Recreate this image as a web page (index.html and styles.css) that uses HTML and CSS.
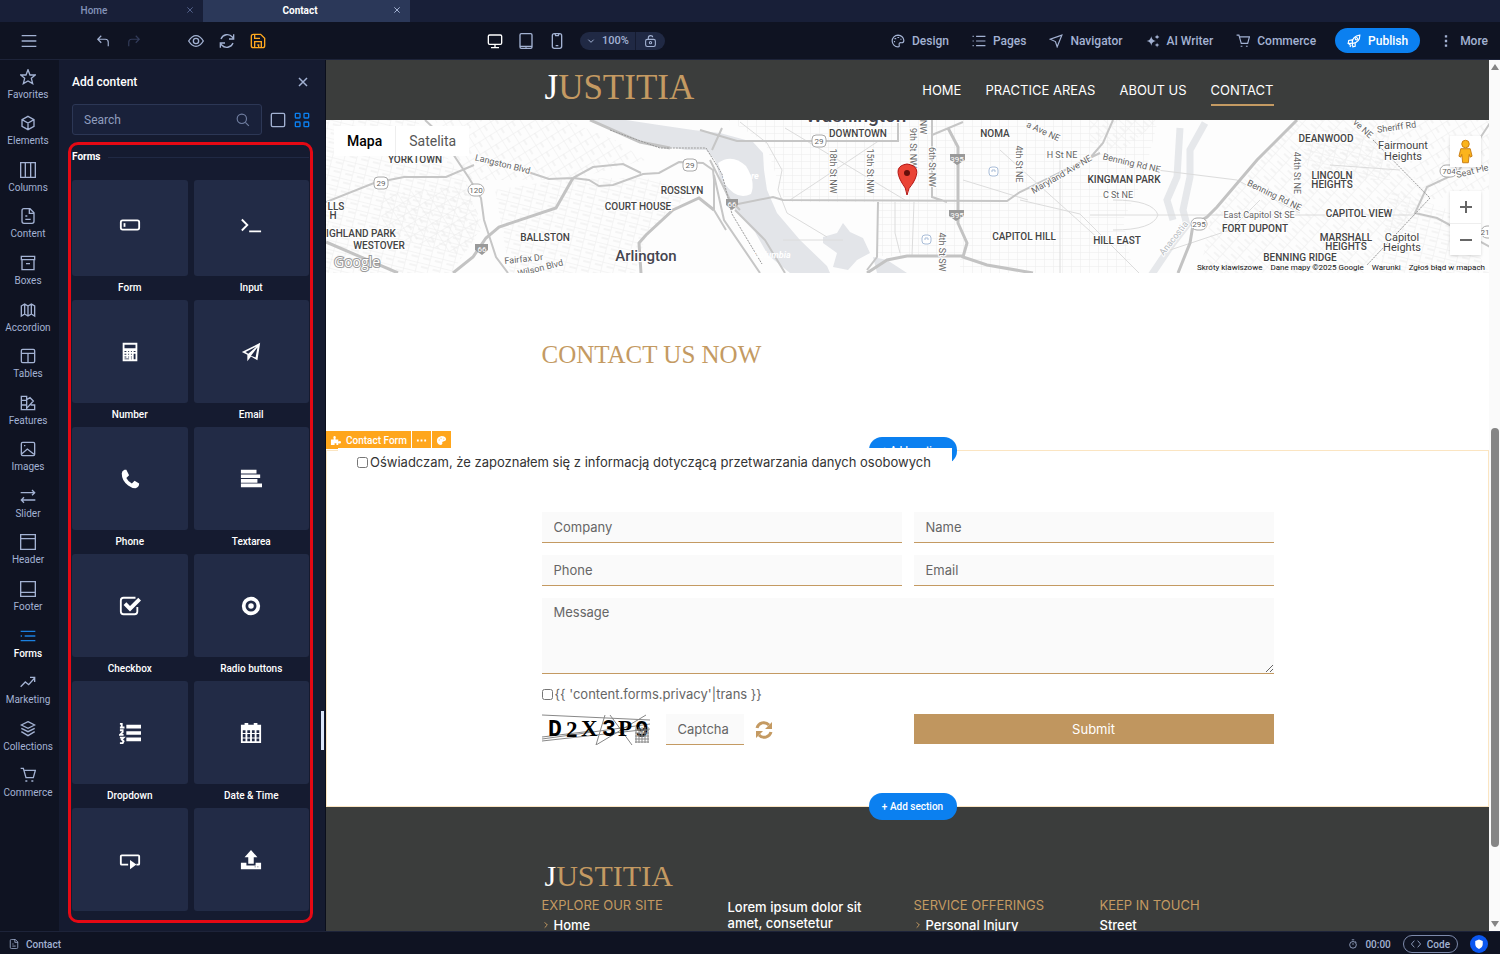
FILE: index.html
```html
<!DOCTYPE html>
<html lang="en">
<head>
	<meta charset="utf-8">
	<meta name="viewport" content="width=device-width, initial-scale=1.0">
	<title>Contact</title>
	<link rel="stylesheet" href="styles.css">
</head>
<body>
	<!-- icon sprite -->
	<svg class="sprite" aria-hidden="true">
		<symbol id="i-menu" viewBox="0 0 24 24"><path d="M1 4h22M1 12h22M1 20h22"/></symbol>
		<symbol id="i-close" viewBox="0 0 24 24"><path d="M4 4l16 16M20 4L4 20"/></symbol>
		<symbol id="i-undo" viewBox="0 0 24 24"><path d="M9 3L3 9l6 6M3 9h13q5 0 5 5v7"/></symbol>
		<symbol id="i-redo" viewBox="0 0 24 24"><path d="M15 3l6 6-6 6M21 9H8q-5 0-5 5v7"/></symbol>
		<symbol id="i-eye" viewBox="0 0 24 24"><path d="M1 12Q6 4 12 4t11 8q-5 8-11 8T1 12z"/><circle cx="12" cy="12" r="4"/></symbol>
		<symbol id="i-sync" viewBox="0 0 24 24"><path d="M3 9a10 10 0 0 1 17-3l2 3M22 2v7h-7M21 15a10 10 0 0 1-17 3l-2-3M2 22v-7h7"/></symbol>
		<symbol id="i-save" viewBox="0 0 24 24"><path d="M5 2h11l6 6v11q0 3-3 3H5q-3 0-3-3V5q0-3 3-3zM7 2v6h8M7 22v-9h10v9M11 18h2v4"/></symbol>
		<symbol id="i-desktop" viewBox="0 0 24 24"><rect x="2" y="3" width="20" height="14" rx="2"/><path d="M12 17v4M6 22h12"/></symbol>
		<symbol id="i-tablet" viewBox="0 0 24 24"><rect x="3" y="1" width="18" height="22" rx="2"/><path d="M3 20h18M11 21h2"/></symbol>
		<symbol id="i-phone" viewBox="0 0 24 24"><rect x="5" y="1" width="14" height="22" rx="3"/><path d="M9 1l1 3h4l1-3M10 19h4"/></symbol>
		<symbol id="i-chevron" viewBox="0 0 24 24"><path d="M4 8l8 8 8-8"/></symbol>
		<symbol id="i-lock" viewBox="0 0 24 24"><rect x="3" y="9" width="18" height="13" rx="3"/><path d="M8 9V6q0-4 4-4t4 3"/><circle cx="12" cy="15" r="2"/></symbol>
		<symbol id="i-palette" viewBox="0 0 24 24"><path d="M12 2a10 10 0 1 0 0 20q3 0 2-3-1-5 4-4 4 0 4-4Q21 3 12 2z"/><path d="M6 8h3M11 6h3M16 9h2M5 13h2"/></symbol>
		<symbol id="i-list" viewBox="0 0 24 24"><path d="M7 4h16M7 12h16M7 20h16M1 4h2M1 12h2M1 20h2"/></symbol>
		<symbol id="i-nav" viewBox="0 0 24 24"><path d="M22 2L2 9l9 4 3 9z"/></symbol>
		<symbol id="i-sparkle" viewBox="0 0 24 24"><path class="fill" d="M9 4q1 7 8 8-7 1-8 8-1-7-8-8 7-1 8-8zM19 1q0 3 4 4-4 1-4 4 0-3-4-4 4-1 4-4zM19 15q0 3 4 4-4 1-4 4 0-3-4-4 4-1 4-4z"/></symbol>
		<symbol id="i-cart" viewBox="0 0 24 24"><path d="M1 2h4l4 14h11l3-11H6"/><path d="M8 21h3M17 21h3"/></symbol>
		<symbol id="i-rocket" viewBox="0 0 24 24"><path d="M9 15q0-11 13-13 0 12-12 14zM9 10L3 11l-1 5 6 0M14 16v5l-4 1-1-6M3 19l3-2M5 22l2-3"/><circle cx="16" cy="8" r="2"/></symbol>
		<symbol id="i-dots" viewBox="0 0 24 24"><path class="fill" d="M10 2h4v4h-4zM10 10h4v4h-4zM10 18h4v4h-4z"/></symbol>
		<symbol id="i-search" viewBox="0 0 24 24"><circle cx="10" cy="10" r="8"/><path d="M16 16l6 6"/></symbol>
		<symbol id="i-square" viewBox="0 0 24 24"><rect x="2" y="2" width="20" height="20" rx="2"/></symbol>
		<symbol id="i-grid" viewBox="0 0 24 24"><rect x="2" y="2" width="7" height="7" rx="1"/><rect x="15" y="2" width="7" height="7" rx="1"/><rect x="2" y="15" width="7" height="7" rx="1"/><rect x="15" y="15" width="7" height="7" rx="1"/></symbol>
		<symbol id="i-star" viewBox="0 0 24 24"><path d="M12 1l3 8h8l-6 5 2 8-7-4-7 4 2-8-6-5h8z"/></symbol>
		<symbol id="i-cube" viewBox="0 0 24 24"><path d="M12 2l9 5v10l-9 5-9-5V7zM3 7l9 5 9-5M12 12v10"/></symbol>
		<symbol id="i-columns" viewBox="0 0 24 24"><path d="M1 1h22v22H1zM8 1v22M16 1v22"/></symbol>
		<symbol id="i-file" viewBox="0 0 24 24"><path d="M6 1h9l6 6v13q0 3-3 3H6q-3 0-3-3V4q0-3 3-3zM14 1v7h7M8 12h3M8 17h8"/></symbol>
		<symbol id="i-box" viewBox="0 0 24 24"><path d="M2 2h20v5H2zM3 7v15h18V7M9 13h6"/></symbol>
		<symbol id="i-accordion" viewBox="0 0 24 24"><path d="M2 6l5-3 5 3 5-3 5 3v15l-5-3-5 3-5-3-5 3zM7 3v15M12 6v15M17 3v15"/></symbol>
		<symbol id="i-table" viewBox="0 0 24 24"><rect x="2" y="2" width="20" height="20" rx="2"/><path d="M2 8h20M12 8v14"/></symbol>
		<symbol id="i-features" viewBox="0 0 24 24"><path d="M2 2h8v20H2zM2 8h8M2 15h8M10 7l5-3 5 5-10 11M10 22h12v-7h-6"/></symbol>
		<symbol id="i-image" viewBox="0 0 24 24"><rect x="2" y="2" width="20" height="20" rx="2"/><path d="M2 20l9-8 10 8M6 7h2"/></symbol>
		<symbol id="i-slider" viewBox="0 0 24 24"><path d="M1 7h21M18 3l4 4-4 4M23 18H2M6 14l-4 4 4 4"/></symbol>
		<symbol id="i-header" viewBox="0 0 24 24"><path d="M1 1h22v22H1zM1 7h22"/></symbol>
		<symbol id="i-footer" viewBox="0 0 24 24"><path d="M1 1h22v22H1zM1 17h22"/></symbol>
		<symbol id="i-forms" viewBox="0 0 24 24"><path d="M1 5h22M7 12h16M1 12h2M1 19h22"/></symbol>
		<symbol id="i-trend" viewBox="0 0 24 24"><path d="M1 19l7-7 5 4 9-10M15 5h7v7"/></symbol>
		<symbol id="i-layers" viewBox="0 0 24 24"><path d="M12 1l10 5-10 5L2 6zM2 11l10 5 10-5M2 16l10 6 10-6"/></symbol>
		<symbol id="i-clock" viewBox="0 0 24 24"><circle cx="12" cy="14" r="8"/><path d="M9 2h6M12 10v4M18 6l2 2"/></symbol>
		<symbol id="i-code" viewBox="0 0 24 24"><path d="M8 4l-7 8 7 8M16 4l7 8-7 8"/></symbol>
		<symbol id="i-shield" viewBox="0 0 24 24"><path class="fill" d="M12 1l9 4v7q0 8-9 12-9-4-9-12V5z"/></symbol>

		<symbol id="t-form" viewBox="0 0 24 24"><rect x="2" y="7" width="20" height="10" rx="2"/><path d="M6 10v4"/></symbol>
		<symbol id="t-input" viewBox="0 0 24 24"><path d="M2 6l6 6-6 6M10 19h13"/></symbol>
		<symbol id="t-number" viewBox="0 0 24 24"><path class="fill" fill-rule="evenodd" d="M4 2h16v20H4zM6 4v4h12V4zM6 11v1h2v-1zM10 11v1h1v-1zM13 11v1h1v-1zM16 11v1h2v-1zM6 14v1h2v-1zM10 14v1h1v-1zM13 14v1h1v-1zM16 14v6h2v-6zM6 17v1h2v-1zM10 17v1h1v-1zM13 17v1h1v-1zM6 19v1h5v-1zM13 19v1h1v-1z"/></symbol>
		<symbol id="t-email" viewBox="0 0 24 24"><path class="fill" fill-rule="evenodd" d="M22 2l-3 19-7-4-4 5v-7l-6-3zM18 6L6 12l3 2zM19 7l-7 9 5 2z"/></symbol>
		<symbol id="t-phone" viewBox="0 0 24 24"><path class="fill" d="M3 6q0-3 3-4h2l3 6-3 3q2 4 6 6l3-3 5 3q0 4-4 5-4 0-8-3-7-5-7-13z"/></symbol>
		<symbol id="t-text" viewBox="0 0 24 24"><path class="fill" d="M1 2h17v4H1zM1 7h21v4H1zM1 12h18v4H1zM1 17h23v4H1z"/></symbol>
		<symbol id="t-check" viewBox="0 0 24 24"><path d="M20 13v5q0 3-3 3H5q-3 0-3-3V6q0-3 3-3h13"/><path class="fill" d="M5 11l3-3 4 4 9-9 3 3-12 12z"/></symbol>
		<symbol id="t-radio" viewBox="0 0 24 24"><circle class="thick" cx="12" cy="12" r="8"/><circle class="fill" cx="12" cy="12" r="3"/></symbol>
		<symbol id="t-drop" viewBox="0 0 24 24"><path class="fill" d="M8 3h16v4H8zM8 10h16v4H8zM8 17h16v4H8z"/><path d="M1 2h2v5M1 6h5M1 9h3v2l-3 3h4M1 17h4l-2 2 2 2-1 2H1"/></symbol>
		<symbol id="t-date" viewBox="0 0 24 24"><path class="fill" fill-rule="evenodd" d="M1 3h4V1h4v2h6V1h4v2h4v20H1zM3 9v3h3V9zM8 9v3h3V9zM13 9v3h3V9zM18 9v3h3V9zM3 13v4h3v-4zM8 13v4h3v-4zM13 13v4h3v-4zM18 13v4h3v-4zM3 18v3h3v-3zM8 18v3h3v-3zM13 18v3h3v-3zM18 18v3h3v-3z"/></symbol>
		<symbol id="t-button" viewBox="0 0 24 24"><path d="M10 17H3q-1 0-1-1V8q0-1 1-1h18q1 0 1 1v8q0 1-1 1h-2"/><path class="fill" d="M12 12l7 5-7 5z"/></symbol>
		<symbol id="t-upload" viewBox="0 0 24 24"><path class="fill" fill-rule="evenodd" d="M12 1l7 8h-4v7H9V9H5zM1 15h6v3h10v-3h6v7H1zM16 19v1h1v-1zM19 19v1h1v-1z"/></symbol>
	</svg>

	<div class="app">
		<div class="tabs">
			<div class="tab"><span>Home</span><button class="tab-close" aria-label="Close Home"><svg class="icon xs"><use href="#i-close"/></svg></button></div>
			<div class="tab active"><span>Contact</span><button class="tab-close" aria-label="Close Contact"><svg class="icon xs"><use href="#i-close"/></svg></button></div>
		</div>

		<div class="toolbar">
			<div class="tools-left">
				<button class="menu" aria-label="Menu"><svg class="icon"><use href="#i-menu"/></svg></button>
				<div class="history">
					<button aria-label="Undo"><svg class="icon sm"><use href="#i-undo"/></svg></button>
					<button class="off" aria-label="Redo"><svg class="icon sm"><use href="#i-redo"/></svg></button>
				</div>
				<div class="actions">
					<button aria-label="Preview"><svg class="icon"><use href="#i-eye"/></svg></button>
					<button aria-label="Refresh"><svg class="icon"><use href="#i-sync"/></svg></button>
					<button class="save" aria-label="Save"><svg class="icon"><use href="#i-save"/></svg></button>
				</div>
			</div>
			<div class="devices">
				<button class="on" aria-label="Desktop"><svg class="icon"><use href="#i-desktop"/></svg></button>
				<button aria-label="Tablet"><svg class="icon"><use href="#i-tablet"/></svg></button>
				<button aria-label="Phone"><svg class="icon"><use href="#i-phone"/></svg></button>
				<div class="zoom">
					<button class="zoom-level"><svg class="icon xs"><use href="#i-chevron"/></svg>100%</button>
					<button class="zoom-lock" aria-label="Lock zoom"><svg class="icon sm"><use href="#i-lock"/></svg></button>
				</div>
			</div>
			<div class="tools-right">
				<button><svg class="icon sm"><use href="#i-palette"/></svg>Design</button>
				<button><svg class="icon sm"><use href="#i-list"/></svg>Pages</button>
				<button><svg class="icon sm"><use href="#i-nav"/></svg>Navigator</button>
				<button><svg class="icon sm"><use href="#i-sparkle"/></svg>AI Writer</button>
				<button><svg class="icon sm"><use href="#i-cart"/></svg>Commerce</button>
				<button class="publish"><svg class="icon sm"><use href="#i-rocket"/></svg>Publish</button>
				<button><svg class="icon sm"><use href="#i-dots"/></svg>More</button>
			</div>
		</div>

		<div class="main">
			<nav class="sidebar">
				<a href="#"><svg class="icon"><use href="#i-star"/></svg>Favorites</a>
				<a href="#"><svg class="icon"><use href="#i-cube"/></svg>Elements</a>
				<a href="#"><svg class="icon"><use href="#i-columns"/></svg>Columns</a>
				<a href="#"><svg class="icon"><use href="#i-file"/></svg>Content</a>
				<a href="#"><svg class="icon"><use href="#i-box"/></svg>Boxes</a>
				<a href="#"><svg class="icon"><use href="#i-accordion"/></svg>Accordion</a>
				<a href="#"><svg class="icon"><use href="#i-table"/></svg>Tables</a>
				<a href="#"><svg class="icon"><use href="#i-features"/></svg>Features</a>
				<a href="#"><svg class="icon"><use href="#i-image"/></svg>Images</a>
				<a href="#"><svg class="icon"><use href="#i-slider"/></svg>Slider</a>
				<a href="#"><svg class="icon"><use href="#i-header"/></svg>Header</a>
				<a href="#"><svg class="icon"><use href="#i-footer"/></svg>Footer</a>
				<a href="#" class="current"><svg class="icon"><use href="#i-forms"/></svg>Forms</a>
				<a href="#"><svg class="icon"><use href="#i-trend"/></svg>Marketing</a>
				<a href="#"><svg class="icon"><use href="#i-layers"/></svg>Collections</a>
				<a href="#"><svg class="icon"><use href="#i-cart"/></svg>Commerce</a>
			</nav>

			<aside class="panel">
				<div class="panel-head">
					<h2>Add content</h2>
					<button aria-label="Close panel"><svg class="icon xm"><use href="#i-close"/></svg></button>
				</div>
				<div class="panel-search">
					<div class="search-box">
						<input type="text" placeholder="Search" aria-label="Search">
						<svg class="icon sm"><use href="#i-search"/></svg>
					</div>
					<button aria-label="Large tiles"><svg class="icon"><use href="#i-square"/></svg></button>
					<button class="on" aria-label="Small tiles"><svg class="icon"><use href="#i-grid"/></svg></button>
				</div>
				<div class="group">
					<h3>Forms</h3>
					<div class="tiles">
						<button class="tile first"><span><svg class="icon lg"><use href="#t-form"/></svg></span>Form</button>
						<button class="tile first"><span><svg class="icon lg"><use href="#t-input"/></svg></span>Input</button>
						<button class="tile"><span><svg class="icon lg"><use href="#t-number"/></svg></span>Number</button>
						<button class="tile"><span><svg class="icon lg"><use href="#t-email"/></svg></span>Email</button>
						<button class="tile"><span><svg class="icon lg"><use href="#t-phone"/></svg></span>Phone</button>
						<button class="tile"><span><svg class="icon lg"><use href="#t-text"/></svg></span>Textarea</button>
						<button class="tile"><span><svg class="icon lg"><use href="#t-check"/></svg></span>Checkbox</button>
						<button class="tile"><span><svg class="icon lg"><use href="#t-radio"/></svg></span>Radio buttons</button>
						<button class="tile"><span><svg class="icon lg"><use href="#t-drop"/></svg></span>Dropdown</button>
						<button class="tile"><span><svg class="icon lg"><use href="#t-date"/></svg></span>Date &amp; Time</button>
						<button class="tile" aria-label="Button"><span><svg class="icon lg"><use href="#t-button"/></svg></span></button>
						<button class="tile" aria-label="File upload"><span><svg class="icon lg"><use href="#t-upload"/></svg></span></button>
					</div>
				</div>
				<div class="panel-thumb"></div>
			</aside>

			<div class="canvas">
				<div class="site">
					<header class="site-head">
						<div class="wrap">
							<div class="logo"><b>J</b>USTITIA</div>
							<nav>
								<a href="#">HOME</a>
								<a href="#">PRACTICE AREAS</a>
								<a href="#">ABOUT US</a>
								<a href="#" class="current">CONTACT</a>
							</nav>
						</div>
					</header>

					<div class="map">
						<svg class="map-view" viewBox="326 120 1163 153" preserveAspectRatio="xMidYMid slice" role="img" aria-label="Washington">
							<defs>
								<pattern id="grid" width="9" height="7" patternUnits="userSpaceOnUse"><path class="street" d="M0 0h9M0 0v7"/></pattern>
								<pattern id="grid-l" width="13" height="11" patternUnits="userSpaceOnUse" patternTransform="rotate(-32)"><path class="street" d="M0 0h13M0 0v11M6 0v6"/></pattern>
								<pattern id="grid-m" width="12" height="9" patternUnits="userSpaceOnUse" patternTransform="rotate(14)"><path class="street" d="M0 0h12M0 0v9M5 4h7"/></pattern>
								<pattern id="grid-r" width="14" height="10" patternUnits="userSpaceOnUse" patternTransform="rotate(42)"><path class="street" d="M0 0h14M0 0v10M7 5h7"/></pattern>
							</defs>
							<!-- small streets -->
							<path fill="url(#grid-m)" d="M326 120h90l50 60 15 50-30 43H326z"/>
							<path fill="url(#grid-l)" d="M380 195l85-10 18 40-20 30-80-20z"/>
							<path fill="url(#grid-l)" d="M435 120h130l50 20 30 20-75 20-100 0z"/>
							<path fill="url(#grid-m)" d="M495 190l75-12 75 0 50 10-50 50-10 35H510z"/>
							<path fill="url(#grid)" d="M728 120h430l-15 60-20 40 10 53H960v-71H785l-20-60z"/>
							<path fill="url(#grid)" d="M878 202h82v54h-82z"/>
							<path fill="url(#grid-r)" d="M1090 120h70l-40 32-30-10z"/>
							<path fill="url(#grid-r)" d="M1210 220l85-100h80l55 80-65 73H1200z"/>
							<path fill="url(#grid-m)" d="M1300 130h90v50h-80zM1390 190l60 20 40 63h-110z"/>
							<path fill="url(#grid-l)" d="M1380 120h109v70l-60 10z"/>
							<!-- water -->
							<path class="water" d="M593 120l19 10 34 13 40 7h20l9 10 7 25 6 15 12 16 15 16 13 23 22 18h40l-3-7-27-26-23-27-10-23-3-20-1-17-10-11-33-9-27-3-34-5-33-5z"/>
							<path class="land" d="M718 163q14-10 28 3 10 16 5 28-14 7-26-10z"/>
							<path class="water" d="M823 237l14-4 6-10 7 9 13 6 7 15-13 7-9 10-15-3 4-14-14-10zM873 257l14 3 20 13h-30z"/>
							<path class="river" d="M1205 123l-15 27v27l-7 33 4 15-14 18-23 34M1180 128l-3 49-10 23 6 20"/>
							<!-- roads -->
							<path class="road-s" d="M740 122l27 21 15 27-4 20 9 23 40 24M783 240h60M895 202v31l5 20M914 202l-2 54M1090 215h325M1157 170l80 10 63 33M785 128l120 72M790 200l90-60M1020 200l60 14 60 60M1060 160v113M963 180l65 20M1000 150l100 90M1113 200q40 0 45 15-5 15-45 15M1330 165l70 5M1170 250l60-20 30-30"/>
							<path class="road" d="M326 202l48-19 30-6h42l28-12M528 172l21 7 24-1 16 2 10 6 14-1 30-11 16-1 20-11 24 1 10 7 1 10v30l12 20M573 178l20-11 30-3 18 9M425 120l14 13 30 45 12 20 3 22 12 37 12 16M700 130l37 11h161v-21M733 205l40-8 10 3 224 1 13-9 80-39M932 120v77l15 5M878 202l-1 55-10 13M932 135l31-13M714 175l10 45 36 53M735 210l30 30 20 33M710 160l20 40 10 10M1113 120l-10 23-13 15M1490 123l-33 50-30 14-12 26 22 5 53 29M722 128l-10 22"/>
							<path class="road-l" d="M453 273l20-16 13-19 13-11 57-19 17-30M326 242l72 31M641 273l-2-30 7-8 27-25 26-12 15 12M590 120l50 22 30 6M948 128l10 19v76l9 20-4 14 24 8 46 8M867 273l20-13 20-4h56M1297 120l-40 40-40 47-10 10-14 8-3 18-12 30"/>
							<path class="border" d="M1373 140l57 58-63 67M610 130l50 18h46l16 26 10 40 30 50"/>
							<!-- road shields -->
							<g class="shield">
								<rect x="374" y="177" width="14" height="12" rx="4"/><text x="381" y="186">29</text>
								<rect x="468" y="184" width="16" height="12" rx="6"/><text x="476" y="193">120</text>
								<rect x="683" y="159" width="14" height="12" rx="4"/><text x="690" y="168">29</text>
								<rect x="812" y="135" width="14" height="12" rx="4"/><text x="819" y="144">29</text>
								<rect x="1191" y="218" width="16" height="12" rx="6"/><text x="1199" y="227">295</text>
								<rect x="1440" y="165" width="17" height="12" rx="6"/><text x="1449" y="174">704</text>
								<rect x="1481" y="226" width="17" height="12" rx="6"/><text x="1485" y="235">21</text>
							</g>
							<g class="shield dark">
								<path d="M475 244h13v6l-6 5-7-5zM726 199h12v6l-6 5-6-5zM950 154h15v6l-8 5-7-5zM949 210h15v6l-8 5-7-5z"/>
								<text x="482" y="252">66</text><text x="732" y="207">66</text><text x="957" y="162">395</text><text x="957" y="218">395</text>
							</g>
							<g class="metro"><rect x="989" y="167" width="9" height="9" rx="3"/><path d="M992 172v-2h3v2"/><rect x="922" y="235" width="9" height="9" rx="3"/><path d="M925 240v-2h3v2"/></g>
							<!-- labels -->
							<g class="area">
								<text x="415" y="163">YORKTOWN</text><text x="336" y="210">LLS</text><text x="333" y="219">H</text>
								<text x="361" y="237">IGHLAND PARK</text><text x="379" y="249">WESTOVER</text>
								<text x="545" y="241">BALLSTON</text><text x="682" y="194">ROSSLYN</text><text x="638" y="210">COURT HOUSE</text>
								<text x="858" y="137">DOWNTOWN</text><text x="995" y="137">NOMA</text><text x="1024" y="240">CAPITOL HILL</text>
								<text x="1124" y="183">KINGMAN PARK</text><text x="1117" y="244">HILL EAST</text><text x="1326" y="142">DEANWOOD</text>
								<text x="1332" y="179">LINCOLN</text><text x="1332" y="188">HEIGHTS</text><text x="1359" y="217">CAPITOL VIEW</text>
								<text x="1255" y="232">FORT DUPONT</text><text x="1346" y="241">MARSHALL</text><text x="1346" y="250">HEIGHTS</text>
								<text x="1300" y="261">BENNING RIDGE</text>
							</g>
							<g class="town">
								<text x="1403" y="149">Fairmount</text><text x="1403" y="160">Heights</text>
								<text x="1402" y="241">Capitol</text><text x="1402" y="251">Heights</text>
							</g>
							<text class="city" x="646" y="261">Arlington</text>
							<text class="capital" x="856" y="122">Washington</text>
							<g class="way">
								<text transform="translate(502 167) rotate(14)">Langston Blvd</text>
								<text transform="translate(524 262) rotate(-6)">Fairfax Dr</text>
								<text transform="translate(541 271) rotate(-14)">Wilson Blvd</text>
								<text transform="translate(830 171) rotate(90)">18th St NW</text>
								<text transform="translate(867 171) rotate(90)">15th St NW</text>
								<text transform="translate(910 148) rotate(90)">9th St NW</text>
								<text transform="translate(929 167) rotate(90)">6th St NW</text>
								<text transform="translate(920 127) rotate(90)">NW</text>
								<text transform="translate(939 252) rotate(90)">4th St SW</text>
								<text transform="translate(1016 164) rotate(90)">4th St NE</text>
								<text x="1062" y="158">H St NE</text>
								<text transform="translate(1063 177) rotate(-30)">Maryland Ave NE</text>
								<text transform="translate(1042 134) rotate(25)">a Ave NE</text>
								<text transform="translate(1131 166) rotate(13)">Benning Rd NE</text>
								<text transform="translate(1273 198) rotate(26)">Benning Rd NE</text>
								<text x="1118" y="198">C St NE</text>
								<text x="1259" y="218">East Capitol St SE</text>
								<text transform="translate(1294 173) rotate(90)">44th St NE</text>
								<text transform="translate(1397 130) rotate(-8)">Sheriff Rd</text>
								<text transform="translate(1361 131) rotate(42)">ve NE</text>
								<text transform="translate(1473 174) rotate(-14)">Seat Ple</text>
								<text transform="translate(1176 240) rotate(-52)" class="faint">Anacostia</text>
								<text x="772" y="258" class="pale">Columbia</text>
								<text x="740" y="179" class="pale">Theodore</text>
							</g>
							<!-- marker -->
							<path class="pin" d="M907 195q-1-8-5-12-10-17 5-19 16 2 6 19-5 5-6 12z"/><circle class="pin-dot" cx="907" cy="173" r="3"/>
							<text class="google" x="334" y="267">Google</text>
						</svg>
						<div class="map-type"><button class="on">Mapa</button><button>Satelita</button></div>
						<button class="pegman" aria-label="Street view">
							<svg viewBox="0 0 16 26"><circle cx="8" cy="5" r="4"/><path d="M3 10h10l2 8-2 1-1-3-1 9H5l-1-9-1 3-2-1z"/></svg>
						</button>
						<div class="map-zoom">
							<button aria-label="Zoom in"><svg class="icon sm"><path d="M7 1v12M1 7h12"/></svg></button>
							<button aria-label="Zoom out"><svg class="icon sm"><path d="M1 7h12"/></svg></button>
						</div>
						<div class="map-legal"><span>Skróty klawiszowe</span><span>Dane mapy ©2025 Google</span><a href="#">Warunki</a><a href="#">Zgłoś błąd w mapach</a></div>
					</div>

					<section class="intro">
						<div class="wrap"><h1>CONTACT US NOW</h1></div>
					</section>

					<section class="contact">
						<div class="section-tag">
							<button><svg viewBox="0 0 12 12"><path d="M1 5h3V4q-1-3 1-3t1 3v1h3v2q3-1 3 1t-3 1v2H7V9H5v2H1z"/></svg>Contact Form</button>
							<button aria-label="More"><svg viewBox="0 0 12 12"><path d="M1 5h2v2H1zM5 5h2v2H5zM9 5h2v2H9z"/></svg></button>
							<button aria-label="Colors"><svg viewBox="0 0 12 12"><path fill-rule="evenodd" d="M6 1q5 0 5 4 0 2-3 2-2 0-1 2 0 2-2 2-4-1-4-5t5-5zM3 5v1h1V5zM5 3v1h1V3zM8 4v1h1V4z"/></svg></button>
						</div>
						<button class="add-section top">+ Add section</button>
						<label class="consent"><input type="checkbox"> Oświadczam, że zapoznałem się z informacją dotyczącą przetwarzania danych osobowych</label>
						<form class="wrap contact-form">
							<input type="text" placeholder="Company" aria-label="Company">
							<input type="text" placeholder="Name" aria-label="Name">
							<input type="tel" placeholder="Phone" aria-label="Phone">
							<input type="email" placeholder="Email" aria-label="Email">
							<textarea placeholder="Message" aria-label="Message"></textarea>
							<label class="privacy"><input type="checkbox">{{ 'content.forms.privacy'|trans }}</label>
							<div class="captcha">
								<svg class="captcha-image" viewBox="0 0 108 31" role="img" aria-label="Captcha code">
									<path d="M0 1l108 5M0 25l108-15M0 27l108-12M54 31l9-30M54 31l50-30M68 1l22 30M0 23l50-6"/>
									<text x="6" y="22" class="mono">D</text><text x="24" y="23">2</text><text x="39" y="22">X</text><text x="60" y="22" class="mono">3</text><text x="76" y="22">P</text><text x="93" y="23" class="mono">9</text>
									<path d="M94 13v16M97 13v16M100 13v16M103 13v16M106 13v16M93 16h14M93 19h14M93 22h14M93 25h14M93 28h14"/>
								</svg>
								<input type="text" placeholder="Captcha" aria-label="Captcha">
								<button type="button" class="reload" aria-label="New code"><svg viewBox="0 0 18 18"><path d="M2 7a7 7 0 0 1 12-3M16 11a7 7 0 0 1-12 3"/><path class="solid" d="M17 1v7h-7zM1 17v-7h7z"/></svg></button>
							</div>
							<button type="submit" class="submit">Submit</button>
						</form>
						<button class="add-section bottom">+ Add section</button>
					</section>

					<footer class="site-foot">
						<div class="wrap">
							<div class="logo small"><b>J</b>USTITIA</div>
							<div class="foot-cols">
								<div><h4>EXPLORE OUR SITE</h4><a href="#"><svg class="icon xs"><use href="#i-chevron"/></svg>Home</a></div>
								<div><p>Lorem ipsum dolor sit amet, consetetur</p></div>
								<div><h4>SERVICE OFFERINGS</h4><a href="#"><svg class="icon xs"><use href="#i-chevron"/></svg>Personal Injury</a></div>
								<div><h4>KEEP IN TOUCH</h4><address>Street</address></div>
							</div>
						</div>
					</footer>
				</div>
				<div class="scrollbar"><i class="up"></i><div class="track"><div class="thumb"></div></div><i class="down"></i></div>
			</div>
		</div>

		<div class="status">
			<span><svg class="icon xxs"><use href="#i-file"/></svg>Contact</span>
			<div class="status-right">
				<span><svg class="icon xxs"><use href="#i-clock"/></svg>00:00</span>
				<button class="code"><svg class="icon xxs"><use href="#i-code"/></svg>Code</button>
				<button class="guard" aria-label="Security"><svg class="icon xxs"><use href="#i-shield"/></svg></button>
			</div>
		</div>
	</div>
</body>
</html>
```
FILE: styles.css
```css
*{
	margin: 0;
	padding: 0;
	box-sizing: border-box;
}
body{
	font-family: Roboto, "Liberation Sans", sans-serif;
	font-size: 12px;
	color: #a3b2d3;
	background-color: #0f1322;
}
button, input, textarea{
	font: inherit;
	color: inherit;
	border: 0;
	background: none;
}
a{
	color: inherit;
	text-decoration: none;
}
svg{
	display: block;
	flex: none;
}
.sprite{
	position: absolute;
	width: 0;
	height: 0;
}
.icon{
	width: 16px;
	height: 16px;
	fill: none;
	stroke: currentColor;
	stroke-width: 2px;
}
.icon.xxs{
	width: 10px;
	height: 10px;
}
.icon.xs{
	width: 8px;
	height: 8px;
	stroke-width: 3px;
}
.icon.xm{
	width: 12px;
	height: 12px;
	stroke-width: 3px;
}
.icon.sm{
	width: 14px;
	height: 14px;
}
.icon.lg{
	width: 22px;
	height: 22px;
}
.fill{
	fill: currentColor;
	stroke: none;
}
.thick{
	stroke-width: 4px;
}
.app{
	display: flex;
	flex-direction: column;
	height: 100vh;
	overflow: hidden;
}

/* tabs */
.tabs{
	display: flex;
	flex: none;
	height: 22px;
	background-color: #181f38;
}
.tab{
	display: flex;
	align-items: center;
	width: 207px;
	padding: 0 9px 2px 4px;
	font-size: 10px;
	font-weight: 500;
	color: #8493b8;
}
.tab:first-child{
	width: 203px;
	padding-left: 2px;
}
.tab span{
	flex: 1;
	text-align: center;
}
.tab.active{
	color: #fff;
	font-weight: 700;
	background-color: #2b3859;
}
.tab-close{
	color: #52608a;
}
.active .tab-close{
	color: #a3b2d3;
}

/* toolbar */
.toolbar{
	display: flex;
	align-items: center;
	flex: none;
	height: 38px;
	border-bottom: 1px solid #1d2339;
	font-weight: 500;
}
.tools-left{
	display: flex;
	align-items: center;
	width: 32%;
	padding-left: 21px;
}
.menu{
	margin-right: 59px;
}
.history, .actions{
	display: flex;
	align-items: center;
	gap: 17px;
}
.actions{
	gap: 15px;
	margin-left: 47px;
}
.off{
	color: #323b59;
}
.save{
	color: #ffa81f;
}
.devices{
	display: flex;
	align-items: center;
	gap: 15px;
	padding-left: 7px;
}
.devices .on{
	color: #fff;
}
.zoom{
	display: flex;
	height: 18px;
	border-radius: 9px;
	background-color: #202944;
	font-size: 11px;
}
.zoom button{
	display: flex;
	align-items: center;
	gap: 7px;
	padding: 0 6px 0 7px;
}
.zoom .zoom-lock{
	border-left: 1px solid #151b30;
	padding: 0 8px;
}
.zoom .icon.sm{
	width: 13px;
}
.tools-right{
	display: flex;
	align-items: center;
	gap: 23px;
	margin-left: auto;
	padding-right: 12px;
}
.tools-right button{
	display: flex;
	align-items: center;
	gap: 7px;
}
.tools-right .publish{
	height: 25px;
	margin: 0 -4px;
	padding: 0 12px;
	border-radius: 13px;
	color: #fff;
	background-color: #0b80f0;
}

/* left column */
.main{
	display: flex;
	flex: 1;
	min-height: 0;
}
.sidebar{
	display: flex;
	flex-direction: column;
	flex: none;
	width: 59px;
	padding: 1px 3px 125px 0;
	font-size: 10px;
}
.sidebar a{
	display: flex;
	flex-direction: column;
	align-items: center;
	justify-content: center;
	gap: 4px;
	flex: 1;
}
.sidebar .current{
	color: #fff;
	font-weight: 500;
}
.sidebar .current .icon{
	color: #1b80e0;
}
.panel{
	position: relative;
	flex: none;
	width: 267px;
	padding: 0 12px 0 9px;
	border-right: 1px solid #0b0f1c;
	background-color: #151b30;
	overflow: hidden;
}
.panel-head{
	display: flex;
	align-items: center;
	justify-content: space-between;
	height: 44px;
	padding: 0 4px;
}
.panel-head h2{
	font-size: 12px;
	font-weight: 500;
	color: #fff;
}
.panel-search{
	display: flex;
	align-items: center;
	gap: 8px;
	padding: 0 3px 0 4px;
}
.search-box{
	display: flex;
	align-items: center;
	flex: 1;
	height: 31px;
	padding: 0 11px;
	border: 1px solid #2c3755;
	border-radius: 3px;
	background-color: #19213a;
}
.search-box input{
	flex: 1;
	width: 0;
	outline: 0;
}
.search-box .icon{
	color: #6f7d9f;
}
.search-box input::placeholder{
	color: #8f9dbe;
}
.panel-search .on{
	color: #0b80f0;
}
.group{
	height: 781px;
	margin-top: 7px;
	padding: 6px 1px 0;
	border: 3px solid #e50914;
	border-radius: 10px;
}
.group h3{
	display: flex;
	align-items: center;
	gap: 7px;
	font-size: 10px;
	line-height: 12px;
	font-weight: 700;
	color: #fff;
}
.group h3::after{
	content: "";
	flex: 1;
	height: 1px;
	background-color: #202944;
}
.tiles{
	display: grid;
	grid-template-columns: 1fr 1fr;
	column-gap: 6px;
	margin-top: 17px;
}
.tile{
	display: flex;
	flex-direction: column;
	height: 127px;
	font-size: 10px;
	line-height: 24px;
	font-weight: 500;
	color: #fff;
	align-items: center;
}
.tile span{
	display: flex;
	align-items: center;
	justify-content: center;
	width: 100%;
	height: 103px;
	border-radius: 3px;
	background-color: #222b46;
}
.tile.first{
	height: 120px;
}
.tile.first span{
	height: 96px;
	padding-bottom: 6px;
}
.panel-thumb{
	position: absolute;
	right: 1px;
	bottom: 181px;
	width: 3px;
	height: 39px;
	background-color: #dce6fa;
}

/* page being edited */
.canvas{
	display: flex;
	flex: 1;
	min-width: 0;
	background-color: #fff;
}
.site{
	flex: 1;
	min-width: 0;
	overflow: hidden;
	font-family: Inter, "Open Sans", sans-serif;
	font-size: 13px;
	color: #333;
}
.wrap{
	max-width: 732px;
	margin: 0 auto;
}
.site-head{
	height: 60px;
	color: #fff;
	background-color: #3b3d3c;
}
.site-head .wrap{
	display: flex;
	align-items: center;
	justify-content: space-between;
	height: 60px;
}
.logo{
	padding: 0 0 5px 3px;
	font-family: "Liberation Serif", serif;
	font-size: 35px;
	line-height: 40px;
	color: #c49a62;
}
.logo b{
	font-weight: 400;
	color: #fff;
}
.logo.small{
	padding: 0 0 0 3px;
	font-size: 30px;
	line-height: 32px;
}
.site-head nav{
	display: flex;
	gap: 24px;
}
.site-head nav a{
	padding: 8px 0 6px;
	line-height: 16px;
	border-bottom: 2px solid transparent;
}
.site-head nav .current{
	border-color: #c49a62;
}

/* map */
.map{
	position: relative;
	height: 153px;
	font-family: Roboto, sans-serif;
}
.map-view{
	width: 100%;
	height: 153px;
	background-color: #fdfdfd;
}
.street{
	fill: none;
	stroke: #ebebeb;
	stroke-width: 1px;
}
.water{
	fill: #e3e5e9;
}
.land{
	fill: #fff;
}
.river, .road, .road-s, .road-l, .border{
	fill: none;
	stroke: #e6e8eb;
	stroke-width: 7px;
}
.road-s{
	stroke: #dcdcdc;
	stroke-width: 1px;
}
.road{
	stroke: #c6c6c6;
	stroke-width: 2px;
}
.road-l{
	stroke: #c3c3c3;
	stroke-width: 3px;
}
.border{
	stroke: #999;
	stroke-width: 1px;
	stroke-dasharray: 2 1;
}
.map-view text{
	stroke: #fff;
	stroke-width: 2px;
	paint-order: stroke;
}
.shield rect{
	fill: #fff;
	stroke: #aaa;
}
.shield text{
	font-size: 8px;
	fill: #666;
	text-anchor: middle;
}
.shield.dark path{
	fill: #999;
}
.map-view .shield.dark text{
	fill: #fff;
	stroke: none;
}
.metro{
	fill: #fff;
	stroke: #a9bdd8;
}
.area text{
	font-size: 10px;
	font-weight: 500;
	fill: #444;
	text-anchor: middle;
}
.town text{
	font-size: 11px;
	fill: #444;
	text-anchor: middle;
}
.city, .capital{
	font-size: 15px;
	font-weight: 500;
	fill: #45454f;
	text-anchor: middle;
}
.capital{
	font-size: 19px;
}
.way text{
	font-size: 9px;
	fill: #666;
	text-anchor: middle;
}
.way .faint{
	fill: #b5b9be;
}
.map-view .way .pale{
	fill: #fff;
	stroke: none;
	font-style: italic;
	font-weight: 700;
}
.pin{
	fill: #ea4335;
	stroke: #b31412;
}
.pin-dot{
	fill: #640f0b;
}
.map-view .google{
	font-family: "Open Sans", sans-serif;
	font-size: 14px;
	fill: #fff;
	stroke: #999;
}
.map-type{
	position: absolute;
	left: 8px;
	top: 6px;
	display: flex;
	background-color: #fff;
	font-size: 14px;
	color: #565656;
}
.map-type button{
	height: 30px;
	padding: 0 13px;
}
.map-type .on{
	font-weight: 500;
	color: #000;
	border-right: 1px solid #eee;
}
.pegman, .map-zoom{
	position: absolute;
	right: 8px;
	top: 16px;
	width: 31px;
	height: 31px;
	background-color: #fff;
	box-shadow: 0 1px 3px rgba(0,0,0,.15);
}
.pegman svg{
	width: 15px;
	height: 25px;
	margin: auto;
	fill: #fbb41c;
	stroke: #c77b10;
}
.map-zoom{
	top: 71px;
	height: 64px;
	color: #666;
}
.map-zoom button{
	display: flex;
	align-items: center;
	justify-content: center;
	width: 100%;
	height: 32px;
}
.map-zoom button + button{
	border-top: 1px solid #eee;
}
.map-legal{
	position: absolute;
	right: 0;
	bottom: 0;
	display: flex;
	gap: 8px;
	padding: 0 4px;
	font-size: 8px;
	line-height: 10px;
	color: #111;
}

/* contact section */
.intro{
	height: 177px;
	padding-top: 66px;
}
.intro h1{
	font-family: "Liberation Serif", serif;
	font-size: 25px;
	line-height: 32px;
	font-weight: 400;
	color: #c49a62;
}
.contact{
	position: relative;
	height: 357px;
	border: 1px solid #fbe5c2;
}
.section-tag{
	position: absolute;
	left: -1px;
	top: -20px;
	display: flex;
	gap: 1px;
	height: 18px;
	font-family: Roboto, sans-serif;
	font-size: 10px;
	font-weight: 500;
	color: #fff;
}
.section-tag button{
	display: flex;
	align-items: center;
	gap: 5px;
	padding: 0 4px;
	background-color: #ffa61c;
}
.section-tag svg{
	width: 11px;
	height: 11px;
	fill: #fff;
}
.add-section{
	position: absolute;
	left: 50%;
	width: 88px;
	height: 27px;
	margin-left: -39px;
	border-radius: 13px;
	font-family: Roboto, sans-serif;
	font-size: 10px;
	font-weight: 500;
	color: #fff;
	background-color: #0b80f0;
}
.add-section.top{
	top: -14px;
}
.add-section.bottom{
	bottom: -14px;
	z-index: 1;
}
.consent{
	position: relative;
	display: inline-flex;
	align-items: center;
	gap: 2px;
	height: 28px;
	margin: -3px 0 0 11px;
	padding: 0 21px 0 19px;
	white-space: nowrap;
	background-color: #fff;
}
.consent input, .privacy input{
	width: 11px;
	height: 11px;
}
.contact-form{
	display: grid;
	grid-template-columns: 1fr 1fr;
	gap: 12px;
	margin-top: 36px;
}
.contact-form input[type=text], .contact-form input[type=tel], .contact-form input[type=email], .contact-form textarea{
	height: 31px;
	padding: 0 12px;
	border-bottom: 1px solid #c49a62;
	background-color: #fafafa;
}
.contact-form textarea{
	grid-column: 1 / 3;
	height: 76px;
	padding-top: 6px;
	resize: vertical;
}
.contact-form ::placeholder{
	color: #666;
	opacity: 1;
}
.privacy{
	display: flex;
	align-items: center;
	grid-column: 1 / 3;
	gap: 2px;
	height: 16px;
	color: #666;
}
.captcha{
	display: flex;
	align-items: center;
}
.captcha-image{
	width: 108px;
	height: 31px;
	fill: none;
	stroke: #888;
	stroke-width: 1px;
}
.captcha-image text{
	font-family: "Liberation Serif", serif;
	font-size: 23px;
	font-weight: 700;
	fill: #000;
	stroke: none;
}
.captcha-image .mono{
	font-family: "Liberation Mono", monospace;
}
.captcha input{
	width: 78px;
	margin: 0 11px 0 16px;
}
.reload svg{
	width: 18px;
	height: 18px;
	fill: none;
	stroke: #c49a62;
	stroke-width: 3px;
}
.reload .solid{
	fill: #c49a62;
	stroke: none;
}
.submit{
	height: 30px;
	color: #fff;
	background-color: #c0965f;
}

/* site footer */
.site-foot{
	height: 300px;
	padding-top: 53px;
	color: #fff;
	background-color: #3b3d3c;
}
.foot-cols{
	display: grid;
	grid-template-columns: repeat(4, 1fr);
	gap: 12px;
	padding-top: 5px;
	line-height: 16px;
	font-weight: 500;
}
.foot-cols h4{
	margin-bottom: 4px;
	font-weight: 400;
	white-space: nowrap;
	color: #c49a62;
}
.foot-cols p{
	padding: 2px 24px 0 0;
}
.foot-cols a{
	display: flex;
	align-items: center;
	gap: 4px;
}
.foot-cols .icon{
	color: #c49a62;
	transform: rotate(-90deg);
}
.foot-cols address{
	font-style: normal;
}
.scrollbar{
	display: flex;
	flex-direction: column;
	align-items: center;
	flex: none;
	width: 11px;
	padding: 4px 0;
	background-color: #fafafa;
}
.scrollbar i{
	width: 0;
	border: 4px solid transparent;
	border-top-width: 0;
	border-bottom: 6px solid #858585;
}
.scrollbar .down{
	transform: rotate(180deg);
}
.track{
	flex: 1;
	width: 8px;
	padding-top: 358px;
}
.thumb{
	height: 419px;
	border-radius: 4px;
	background-color: #858585;
}

/* status bar */
.status{
	display: flex;
	align-items: center;
	justify-content: space-between;
	flex: none;
	height: 23px;
	padding: 2px 12px 0 9px;
	border-top: 1px solid #1d2339;
	font-size: 10px;
	font-weight: 500;
}
.status span, .status-right, .code{
	display: flex;
	align-items: center;
	gap: 7px;
}
.status-right{
	gap: 12px;
}
.code{
	height: 18px;
	padding: 0 7px;
	border: 1px solid #7d8aab;
	border-radius: 9px;
	gap: 6px;
}
.guard{
	display: flex;
	align-items: center;
	justify-content: center;
	width: 18px;
	height: 18px;
	border-radius: 50%;
	color: #fff;
	background-color: #0b57f0;
}
```
